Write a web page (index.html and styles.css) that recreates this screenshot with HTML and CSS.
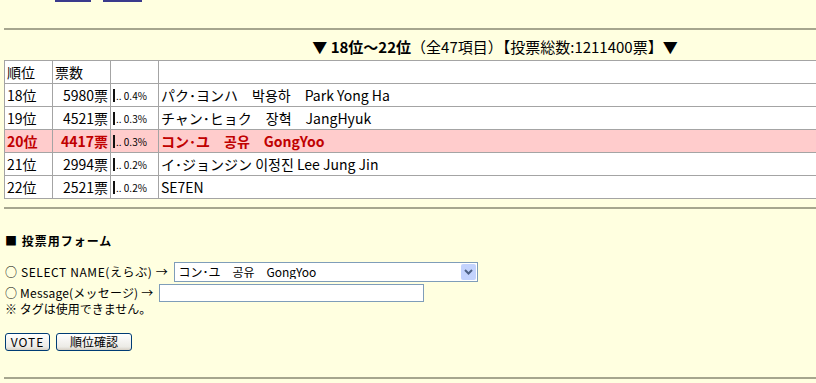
FILE: index.html
```html
<!DOCTYPE html>
<html lang="ja">
<head>
  <meta charset="UTF-8" />
  <title>投票ランキング 18位～22位</title>
  <link rel="stylesheet" href="styles.css">
</head>
<body>
  <div class="page">
    <div class="topnav">
      <a href="#" class="navlink nav-prev"></a>
      <a href="#" class="navlink nav-next"></a>
    </div>
    <hr class="rule">

    <h2 class="range">▼ <b>18位～22位</b>（全47項目）【投票総数:1211400票】▼</h2>

    <table class="rank">
      <tr class="head">
        <td class="c-rank">順位</td>
        <td class="c-vote-h">票数</td>
        <td class="c-bar"></td>
        <td class="c-name"></td>
      </tr>
      <tr>
        <td class="c-rank">18位</td>
        <td class="c-vote">5980票</td>
        <td class="c-bar"><span class="bar"></span><small>.. 0.4%</small></td>
        <td class="c-name">パク･ヨンハ　박용하　Park Yong Ha</td>
      </tr>
      <tr>
        <td class="c-rank">19位</td>
        <td class="c-vote">4521票</td>
        <td class="c-bar"><span class="bar"></span><small>.. 0.3%</small></td>
        <td class="c-name">チャン･ヒョク　장혁　JangHyuk</td>
      </tr>
      <tr class="selected">
        <td class="c-rank">20位</td>
        <td class="c-vote">4417票</td>
        <td class="c-bar"><span class="bar"></span><small>.. 0.3%</small></td>
        <td class="c-name">コン･ユ　공유　GongYoo</td>
      </tr>
      <tr>
        <td class="c-rank">21位</td>
        <td class="c-vote">2994票</td>
        <td class="c-bar"><span class="bar"></span><small>.. 0.2%</small></td>
        <td class="c-name">イ･ジョンジン 이정진 Lee Jung Jin</td>
      </tr>
      <tr>
        <td class="c-rank">22位</td>
        <td class="c-vote">2521票</td>
        <td class="c-bar"><span class="bar"></span><small>.. 0.2%</small></td>
        <td class="c-name">SE7EN</td>
      </tr>
    </table>

    <hr class="rule rule-mid">

    <form class="vote-form" onsubmit="return false;">
      <div class="form-title">■ 投票用フォーム</div>
      <div class="form-row row-select">
        <span class="label label-select">○ SELECT NAME(えらぶ) →</span>
        <span class="select-wrap">
          <select name="name">
            <option>コン･ユ　공유　GongYoo</option>
            <option>パク･ヨンハ　박용하　Park Yong Ha</option>
            <option>チャン･ヒョク　장혁　JangHyuk</option>
            <option>イ･ジョンジン 이정진 Lee Jung Jin</option>
            <option>SE7EN</option>
          </select>
          <span class="drop">
            <svg width="9" height="6" viewBox="0 0 9 6"><path d="M1 1 L4.5 4.5 L8 1" fill="none" stroke="#4d6185" stroke-width="2"/></svg>
          </span>
        </span>
      </div>
      <div class="form-row row-msg">
        <span class="label label-msg">○ Message(メッセージ) →</span>
        <input type="text" name="comment" class="msg">
      </div>
      <div class="note">※ タグは使用できません。</div>
      <div class="buttons">
        <button type="submit" class="btn btn-vote">VOTE</button>
        <button type="button" class="btn btn-wide">順位確認</button>
      </div>
    </form>

    <hr class="rule rule-bottom">
  </div>
</body>
</html>
```

FILE: styles.css
```css
body {
  margin: 0;
  background: #ffffe0;
  color: #000;
  font-family: "MS PGothic", "Noto Sans CJK JP", "Noto Sans CJK KR", sans-serif;
  overflow: hidden;
}

.topnav {
  height: 3px;
  display: flex;
  gap: 12px;
  padding-left: 55px;
}

.navlink {
  display: block;
  width: 36px;
  height: 2px;
  background: #3a3a8c;
}

.nav-next {
  width: 39px;
}

.rule {
  margin: 25px 0 0 4px;
  height: 0;
  border: 0;
  border-top: 2px solid #a6a68e;
}

.range {
  margin: 8px 0 0;
  padding-left: 174px;
  text-align: center;
  font-size: 15px;
  font-weight: normal;
  line-height: 17px;
  height: 22px;
}

.range b {
  font-weight: bold;
}

.rank {
  margin-left: 4px;
  width: 812px;
  border-collapse: collapse;
  font-size: 14px;
}

.rank td {
  height: 22px;
  padding: 0 2px;
  border: 1px solid #a4a4a4;
  background: #fff;
  line-height: 16px;
  white-space: nowrap;
}

.rank td.c-name {
  border-right: 0;
}

.c-rank {
  width: 43px;
}

.c-vote,
.c-vote-h {
  width: 53px;
}

.c-vote {
  text-align: right;
}

.c-bar {
  width: 43px;
}

.bar {
  display: inline-block;
  width: 2px;
  height: 13px;
  background: #111;
  vertical-align: -2px;
  margin-right: 1px;
}

.c-bar small {
  font-size: 10px;
}

.rank tr.selected td {
  background: #ffcccc;
  color: #c00000;
  font-weight: bold;
}

.rank tr.selected td.c-bar {
  color: #000;
  font-weight: normal;
}

.rule-mid {
  margin-top: 8px;
}

.vote-form {
  padding-left: 5px;
  font-size: 12px;
  line-height: 14px;
}

.form-title {
  margin-top: 25px;
  font-weight: bold;
  letter-spacing: 1px;
}

.form-row {
  display: flex;
  align-items: center;
  gap: 6px;
}

.label-select {
  letter-spacing: 0.6px;
}

.label-msg {
  letter-spacing: 0.2px;
}

.row-select {
  margin-top: 13px;
  height: 21px;
}

.row-msg {
  margin-top: 1px;
  height: 19px;
}

.select-wrap {
  position: relative;
  display: inline-block;
}

.select-wrap select {
  appearance: none;
  width: 304px;
  height: 20px;
  border: 1px solid #7f9db9;
  background: #fff;
  font: inherit;
  padding: 0 3px;
  margin: 0;
}

.drop {
  position: absolute;
  top: 2px;
  right: 2px;
  width: 15px;
  height: 16px;
  background: #c3d3fd;
  border-radius: 2px;
  display: flex;
  align-items: center;
  justify-content: center;
  pointer-events: none;
}

.msg {
  width: 265px;
  height: 18px;
  box-sizing: border-box;
  border: 1px solid #7f9db9;
  background: #fff;
  margin: 0;
}

.buttons {
  margin-top: 17px;
  display: flex;
  gap: 6px;
}

.btn {
  height: 18px;
  padding: 0 4px;
  font: inherit;
  font-size: 12px;
  line-height: 14px;
  border: 1px solid #003c74;
  border-radius: 3px;
  background: linear-gradient(#ffffff, #ecebe6 80%, #d6d0c5);
  color: #000;
}

.btn-vote {
  width: 45px;
  letter-spacing: 1px;
}

.btn-wide {
  width: 76px;
}

.rule-bottom {
  margin-top: 26px;
}
```
